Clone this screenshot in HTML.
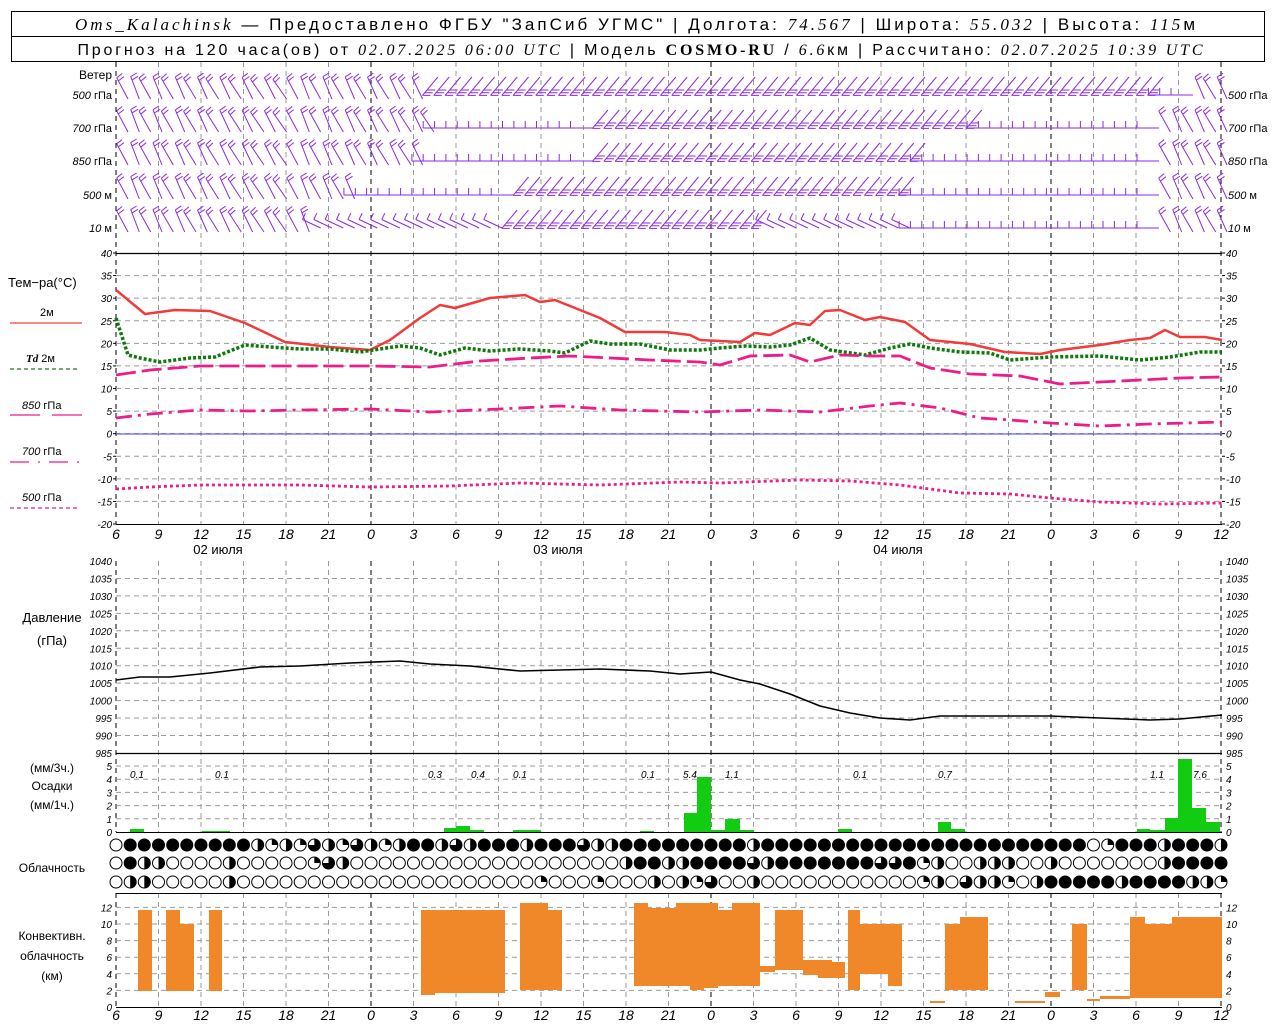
<!DOCTYPE html>
<html><head><meta charset="utf-8"><style>
html,body{margin:0;padding:0;background:#fff;width:1280px;height:1024px;overflow:hidden}
svg{display:block}
text{font-family:"Liberation Sans",sans-serif}
.it{font-style:italic}
.ax{font-size:10px;font-style:italic}
.lb{font-size:12px}
.tx{font-size:14px;font-style:italic}
</style></head><body>
<svg id="s" width="1280" height="1024" xmlns="http://www.w3.org/2000/svg">
<rect width="1280" height="1024" fill="#fff"/>
<rect x="11.5" y="11.5" width="1253" height="50" fill="none" stroke="#000"/>
<line x1="11" y1="36.5" x2="1265" y2="36.5" stroke="#000"/>
<text x="635" y="30" text-anchor="middle" font-size="17" textLength="1120" lengthAdjust="spacing"><tspan font-family="Liberation Serif" font-style="italic">Oms_Kalachinsk</tspan> — Предоставлено ФГБУ "ЗапСиб УГМС" | Долгота: <tspan font-family="Liberation Serif" font-style="italic">74.567</tspan> | Широта: <tspan font-family="Liberation Serif" font-style="italic">55.032</tspan> | Высота: <tspan font-family="Liberation Serif" font-style="italic">115</tspan>м</text>
<text x="640" y="55" text-anchor="middle" font-size="16" textLength="1125" lengthAdjust="spacing">Прогноз на 120 часа(ов) от <tspan font-family="Liberation Serif" font-style="italic">02.07.2025 06:00 UTC</tspan> | Модель <tspan font-family="Liberation Serif" font-weight="bold">COSMO-RU</tspan> / <tspan font-family="Liberation Serif" font-style="italic">6.6</tspan>км | Рассчитано: <tspan font-family="Liberation Serif" font-style="italic">02.07.2025 10:39 UTC</tspan></text>
<g id="g"></g>
<g class="lb">
<text x="112" y="79" text-anchor="end">Ветер</text>
<text x="8" y="287" font-size="13">Тем−ра(°С)</text>
<text x="40" y="316" font-size="11">2м</text>
<line x1="10" y1="323" x2="82" y2="323" stroke="#f04040" stroke-width="1.3"/>
<text x="26" y="362" font-size="11"><tspan font-family="Liberation Serif" font-style="italic" font-weight="bold">Td</tspan>  2м</text>
<line x1="10" y1="369" x2="78" y2="369" stroke="#1a7a1a" stroke-width="1.3" stroke-dasharray="4,3"/>
<text x="22" y="409" font-size="11"><tspan font-style="italic">850</tspan> гПа</text>
<line x1="10" y1="415" x2="82" y2="415" stroke="#ee1c8a" stroke-width="1.3" stroke-dasharray="30,12"/>
<text x="22" y="455" font-size="11"><tspan font-style="italic">700</tspan> гПа</text>
<line x1="10" y1="462" x2="82" y2="462" stroke="#ee1c8a" stroke-width="1.3" stroke-dasharray="19,9,2,9"/>
<text x="22" y="501" font-size="11"><tspan font-style="italic">500</tspan> гПа</text>
<line x1="10" y1="508" x2="78" y2="508" stroke="#ee1c8a" stroke-width="1.3" stroke-dasharray="4,3"/>
<text x="52" y="622" text-anchor="middle" font-size="13">Давление</text>
<text x="52" y="645" text-anchor="middle" font-size="13">(гПа)</text>
<text x="52" y="772" text-anchor="middle" font-size="12">(мм/3ч.)</text>
<text x="52" y="790" text-anchor="middle" font-size="12">Осадки</text>
<text x="52" y="809" text-anchor="middle" font-size="12">(мм/1ч.)</text>
<text x="52" y="872" text-anchor="middle" font-size="12">Облачность</text>
<text x="52" y="940" text-anchor="middle" font-size="12">Конвективн.</text>
<text x="52" y="960" text-anchor="middle" font-size="12">облачность</text>
<text x="52" y="980" text-anchor="middle" font-size="12">(км)</text>
<text x="218" y="554" text-anchor="middle" font-size="13">02 июля</text>
<text x="558" y="554" text-anchor="middle" font-size="13">03 июля</text>
<text x="898" y="554" text-anchor="middle" font-size="13">04 июля</text>
</g>
</svg>
<script>
(function(){
var g=document.getElementById('g'),s='';
function L(x1,y1,x2,y2,c,w,d){s+='<line x1="'+x1+'" y1="'+y1+'" x2="'+x2+'" y2="'+y2+'" stroke="'+c+'" stroke-width="'+(w||1)+'"'+(d?' stroke-dasharray="'+d+'"':'')+'/>';}
function T(x,y,t,a,cl,extra){s+='<text x="'+x+'" y="'+y+'" text-anchor="'+(a||'start')+'" class="'+(cl||'ax')+'" '+(extra||'')+'>'+t+'</text>';}
var X0=116,X1=1222;
for(var k=0;k<=26;k++){var x=X0+k*42.5;var mid=(k==6||k==14||k==22||k==0||k==26);var c=mid?'#000':'#9a9a9a';
 [[62,524],[561,832],[893,1007]].forEach(function(r){L(x,r[0],x,r[1],c,1,'5,4');});}
function ty(t){return 253+(40-t)*4.517;}
function py(p){return 561+(1040-p)*3.49;}
function ry(m){return 832-m*13.2;}
function cy(km){return 1007-km*8.3;}
for(var t=35;t>=-15;t-=5)L(X0,ty(t),X1,ty(t),'#9a9a9a',1,'5,4');
for(var p=1035;p>=990;p-=5)L(X0,py(p),X1,py(p),'#9a9a9a',1,'5,4');
for(var m=1;m<=5;m++)L(X0,ry(m),X1,ry(m),'#9a9a9a',1,'5,4');
for(var km=2;km<=12;km+=2)L(X0,cy(km),X1,cy(km),'#9a9a9a',1,'5,4');
L(X0,253.5,X1,253.5,'#000',1.2);L(X0,524.5,X1,524.5,'#000',1);
L(X0,753.5,X1,753.5,'#000',1.2);L(X0,832.5,X1,832.5,'#000',1);
L(X0,893.5,X1,893.5,'#000',1);L(X0,1007.5,X1,1007.5,'#000',1);
for(var t=40;t>=-20;t-=5){T(112,ty(t)+4,t,'end');T(1226,ty(t)+4,t);L(X0-3,ty(t),X0,ty(t),'#000');L(X1,ty(t),X1+3,ty(t),'#000');}
for(var p=1040;p>=985;p-=5){T(112,py(p)+4,p,'end');T(1226,py(p)+4,p);}
for(var m=0;m<=5;m++){T(112,ry(m)+4,m,'end');T(1226,ry(m)+4,m);}
for(var km=0;km<=12;km+=2){T(112,cy(km)+4,km,'end');T(1226,cy(km)+4,km);}
var hrs=[6,9,12,15,18,21,0,3,6,9,12,15,18,21,0,3,6,9,12,15,18,21,0,3,6,9,12];
for(var k=0;k<27;k++){T(X0+k*42.5,539,hrs[k],'middle','tx');T(X0+k*42.5,1020,hrs[k],'middle','tx');}
var wl=[['500 гПа',99],['700 гПа',132],['850 гПа',165],['500  м',199],['10   м',232]];
wl.forEach(function(w){var p=w[0].split(/\s+/);s+='<text x="112" y="'+w[1]+'" text-anchor="end" font-size="11"><tspan font-style="italic">'+p[0]+'</tspan> '+p[1]+'</text>';
 s+='<text x="1228" y="'+w[1]+'" font-size="11"><tspan font-style="italic">'+p[0]+'</tspan> '+p[1]+'</text>';});
var rows=[[95,[[420,'A'],[1150,'B'],[1190,'C'],[9999,'A']]],[128,[[430,'A'],[590,'C'],[970,'B'],[1150,'C'],[9999,'A']]],
[161,[[420,'A'],[590,'C'],[920,'B'],[1150,'C'],[9999,'A']]],[195,[[350,'A'],[510,'C'],[900,'B'],[1160,'C'],[9999,'A']]],
[228,[[310,'A'],[500,'E'],[760,'B'],[900,'E'],[1150,'C'],[9999,'A']]]];
var P='#8a2be2';
rows.forEach(function(r){var y=r[0];var idx=0;for(var x=118;x<1218;x+=11.33){idx++;var ty2='A';for(var i=0;i<r[1].length;i++){if(x<r[1][i][0]){ty2=r[1][i][1];break;}}
 var th,len=24,n=2,fl=7,ax=x+10,ay=y,fd;
 if(ty2=='A'){th=-118+((idx*37)%15)-7;n=2;fd=th+80;ay=y+4;}
 else if(ty2=='B'){th=130;n=3;len=24;ax=x+14;ay=y-18;fd=0;fl=8;}
 else if(ty2=='C'){th=180;n=1;len=22;fd=-90;}
 else{th=-155;n=1;len=20;fd=th+90;}
 var a=th*Math.PI/180,tx=ax+len*Math.cos(a),tyy=ay+len*Math.sin(a);
 var fa=fd*Math.PI/180;var ux=Math.cos(a),uy=Math.sin(a);
 var d='M'+ax.toFixed(1)+' '+ay.toFixed(1)+'L'+tx.toFixed(1)+' '+tyy.toFixed(1);
 for(var j=0;j<n;j++){var bx=tx-ux*j*3.5,by=tyy-uy*j*3.5;d+='M'+bx.toFixed(1)+' '+by.toFixed(1)+'L'+(bx+fl*Math.cos(fa)).toFixed(1)+' '+(by+fl*Math.sin(fa)).toFixed(1);}
 s+='<path d="'+d+'" stroke="'+P+'" stroke-width="1" fill="none"/>';}});
function PL(pts,c,w,d){s+='<polyline points="'+pts+'" fill="none" stroke="'+c+'" stroke-width="'+w+'"'+(d?' stroke-dasharray="'+d+'"':'')+' stroke-linejoin="round"/>';}
L(X0,434,X1,434,'#3a3aff',1);
PL('116,290 145,314 175,310 210,311 245,323 285,342 330,347 370,350 390,340 420,318 440,305 455,308 490,298 525,295 540,302 555,300 600,318 625,332 665,332 690,335 700,340 740,342 755,333 770,335 795,323 810,325 825,311 840,310 865,320 880,317 905,322 930,340 970,344 1005,352 1040,354 1060,350 1100,345 1130,340 1150,338 1165,330 1180,337 1205,337 1222,340','#f23a3a',2.5);
PL('116,318 128,355 140,358 160,362 190,358 215,357 245,345 270,347 300,349 330,349 360,352 400,346 420,348 440,355 465,348 490,351 520,349 550,351 565,353 590,341 610,344 640,344 670,350 700,350 720,348 745,346 770,347 790,345 810,338 830,350 865,355 890,348 910,344 930,348 960,352 990,353 1010,360 1050,357 1100,356 1140,360 1170,357 1200,352 1222,352','#0a7a0a',3.5,'3,2');
PL('116,375 150,370 200,366 240,366 300,366 370,366 430,367 480,361 530,358 570,356 650,360 700,362 720,365 750,356 790,355 810,362 840,355 870,356 900,356 930,368 970,374 1020,376 1060,384 1100,382 1140,380 1180,378 1222,377','#ee1c8a',2.8,'20,6');
PL('116,418 150,414 200,410 250,411 300,410 370,409 430,412 500,409 560,406 620,410 700,412 760,410 820,412 870,406 900,403 940,408 980,418 1010,420 1050,423 1100,426 1150,424 1222,422','#ee1c8a',2.8,'16,6,3,6');
PL('116,489 150,487 200,485 300,485 370,487 450,486 520,483 600,485 680,482 720,483 800,480 850,481 900,485 960,493 1010,494 1050,498 1100,502 1160,504 1222,503','#ee1c8a',2.8,'3,3');
PL('116,680 140,677 170,677 210,673 260,667 300,666 350,663 400,661 430,664 470,666 520,671 560,670 600,669 650,671 680,674 711,672 740,680 760,684 790,694 820,706 850,713 880,718 910,720 940,716 1000,716 1050,716 1100,718 1150,720 1180,719 1222,715','#000',1.6);
var G='#12cc12';
[[130,144,829],[202,230,831],[444,456,828],[456,470,826],[470,484,830],[513,541,830],[640,654,831],[684,697,813],[697,711,777],[711,725,830],[725,740,819],[740,754,830],[838,852,829],[938,951,822],[951,965,829],[1137,1150,829],[1150,1165,830],[1165,1178,818],[1178,1192,759],[1192,1206,808],[1206,1220,822]].forEach(function(b){s+='<rect x="'+b[0]+'" y="'+b[2]+'" width="'+(b[1]-b[0])+'" height="'+(832-b[2])+'" fill="'+G+'"/>';});
[['0.1',137],['0.1',222],['0.3',435],['0.4',478],['0.1',520],['0.1',648],['5.4',690],['1.1',732],['0.1',860],['0.7',945],['1.1',1157],['7.6',1200]].forEach(function(p){T(p[1],778,p[0],'middle','ax','font-size="12"');});
var O='#f0882a';
[[138,152,910,991],[166,180,910,991],[180,194,924,991],[209,222,910,991],[421,435,910,995],[435,505,910,993],[520,548,903,990],[548,562,910,990],[634,648,903,986],[648,676,908,986],[676,690,903,986],[690,704,903,990],[704,718,903,988],[718,732,910,986],[732,760,903,986],[760,775,966,972],[775,803,910,970],[803,832,960,975],[818,845,962,978],[848,860,910,990],[860,888,924,974],[888,902,924,986],[930,945,1001,1003],[945,960,924,990],[960,988,917,990],[1015,1045,1001,1003],[1045,1060,992,997],[1072,1087,924,990],[1087,1100,999,1001],[1100,1130,996,999],[1130,1145,917,998],[1145,1172,924,998],[1172,1222,917,998]].forEach(function(b){s+='<rect x="'+b[0]+'" y="'+b[2]+'" width="'+(b[1]-b[0])+'" height="'+(b[3]-b[2])+'" fill="'+O+'"/>';});
var R=['0FFFFFFFFFHQHQTHQTHQHFFHTHFFFHFFFTHHFFFFFFFFFHFFFFFFFFFFFFFFFFFFFFFFF0QFFFHFFFHF',
'0FHH0000H00000QTH0000000000000000000HFFHHFFFFTHFFFFFFFTTFQH00HHH00H0000000HFFFF',
'0HH00000H000000000000000000000Q000Q000H0HQT00H00000000000QH0THHQ0HFFFFFHFFFFHHQ'];
var ys=[845,863,882];
R.forEach(function(row,ri){var y=ys[ri];for(var k=0;k<79;k++){var x=116+k*14.167,c=row.charAt(k)||'0',r=6;
 s+='<circle cx="'+x.toFixed(1)+'" cy="'+y+'" r="'+r+'" fill="'+(c=='F'?'#000':'#fff')+'" stroke="#000" stroke-width="1"/>';
 if(c=='H'){s+='<path d="M'+x.toFixed(1)+' '+(y-r)+'A'+r+' '+r+' 0 0 1 '+x.toFixed(1)+' '+(y+r)+'Z" fill="#000"/>';}
 if(c=='Q'){s+='<path d="M'+x.toFixed(1)+' '+y+'L'+x.toFixed(1)+' '+(y-r)+'A'+r+' '+r+' 0 0 1 '+(x+r).toFixed(1)+' '+y+'Z" fill="#000"/>';}
 if(c=='T'){s+='<path d="M'+x.toFixed(1)+' '+y+'L'+x.toFixed(1)+' '+(y-r)+'A'+r+' '+r+' 0 1 1 '+(x-r).toFixed(1)+' '+y+'Z" fill="#000"/>';}
}});
g.innerHTML=s;
})();
</script>
</body></html>
